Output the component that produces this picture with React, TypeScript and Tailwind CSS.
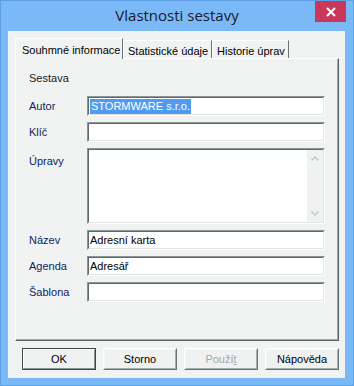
import React from "react";

const F = { fontFamily: '"Liberation Sans", Arial, sans-serif' };

function Field({ children, h = 20 }: { children?: React.ReactNode; h?: number }) {
  return (
    <div
      className="w-[238px] border-t border-l border-r border-b border-t-[#8a9494] border-l-[#8a9494] border-r-[#ffffff] border-b-[#ffffff]"
      style={{ height: h }}
    >
      <div className="h-full w-full border-t border-l border-r border-b border-t-[#5f6a6a] border-l-[#5f6a6a] border-r-[#e3e6e6] border-b-[#e3e6e6] bg-white flex items-center pl-[1px] text-[11px] text-black">
        {children}
      </div>
    </div>
  );
}

function Label({ children }: { children: React.ReactNode }) {
  return <div className="w-[58px] text-[11px] text-[#0f1e5e]">{children}</div>;
}

function Btn({ children, def, disabled }: { children: React.ReactNode; def?: boolean; disabled?: boolean }) {
  return (
    <div
      className={
        "w-[75px] h-[22px] border " +
        (def ? "border-[#3c4646]" : "border-t-white border-l-white border-r-[#6a7272] border-b-[#6a7272]")
      }
    >
      <div
        className={
          "h-full w-full border flex items-center justify-center text-[11px] bg-[#f0f2f2] " +
          (def
            ? "border-t-white border-l-white border-r-[#8a9090] border-b-[#8a9090]"
            : "border-t-[#f6f6f6] border-l-[#f6f6f6] border-r-[#a8adad] border-b-[#a8adad]") +
          (disabled ? " text-[#a2a8a8]" : " text-black")
        }
      >
        {children}
      </div>
    </div>
  );
}

export default function App() {
  return (
    <div className="w-[354px] h-[386px] bg-[#7bb9f6] border border-[#5c9fe3] flex flex-col relative" style={F}>
      <div className="h-[30px] flex items-center justify-center">
        <span
          className="text-[15px] text-[#1a1a2a] mt-[-1px]"
          style={{ fontFamily: '"Open Sans", "Noto Sans", sans-serif' }}
        >
          Vlastnosti sestavy
        </span>
      </div>
      <div className="absolute top-0 right-[7px] w-[31px] h-[21px] bg-[#c9375a] flex items-center justify-center">
        <svg width="10" height="10" viewBox="0 0 10 10">
          <path d="M1 1 L9 9 M9 1 L1 9" stroke="white" strokeWidth="2" />
        </svg>
      </div>
      <div className="ml-[7px] mr-[8px] mb-[7px] flex-1 bg-[#f1f3f3] flex flex-col pl-[7px] pr-[6px] pt-[6px]">
        <div className="flex items-end h-[21px] text-[11px] text-black">
          <div className="h-[21px] w-[108px] border-t border-l border-t-white border-l-white border-r border-r-[#6a7272] bg-[#f1f3f3] pl-[6px] pt-[3px] relative z-10 -mb-[1px]">
            Souhmné informace
          </div>
          <div className="h-[18px] w-[89px] border-t border-l border-t-white border-l-white border-r border-r-[#6a7272] pl-[4px] pt-[2px]">
            Statistické údaje
          </div>
          <div className="h-[18px] w-[77px] border-t border-l border-t-white border-l-white border-r border-r-[#6a7272] pl-[4px] pt-[2px]">
            Historie úprav
          </div>
        </div>
        <div className="w-[324px] h-[283px] border-t border-l border-t-white border-l-white border-r border-b border-r-[#5a6464] border-b-[#5a6464]">
          <div className="h-full w-full border-r border-b border-r-[#a0a6a6] border-b-[#a0a6a6] pl-[13px] pt-[11px] flex flex-col">
            <div className="h-[16px] text-[11px] text-[#1c1c24] flex items-center">Sestava</div>
            <div className="flex items-center mt-[10px]">
              <Label>Autor</Label>
              <Field>
                <span className="bg-[#4f9bf0] text-white px-[1px] leading-[15px] text-[11px]">STORMWARE s.r.o.</span>
              </Field>
            </div>
            <div className="flex items-center mt-[6px]">
              <Label>Klíč</Label>
              <Field />
            </div>
            <div className="flex items-start mt-[6px]">
              <Label>
                <div className="mt-[5px]">Úpravy</div>
              </Label>
              <div className="w-[238px] h-[76px] border-t border-l border-r border-b border-t-[#8a9494] border-l-[#8a9494] border-r-white border-b-white">
                <div className="h-full w-full border-t border-l border-r border-b border-t-[#5f6a6a] border-l-[#5f6a6a] border-r-[#e3e6e6] border-b-[#e3e6e6] bg-white flex justify-end">
                  <div className="w-[16px] h-full bg-[#f0f2f2] flex flex-col justify-between items-center py-[6px]">
                    <svg width="8" height="5" viewBox="0 0 8 5">
                      <path d="M0.5 4.5 L4 1 L7.5 4.5" stroke="#c4cccc" strokeWidth="1.6" fill="none" />
                    </svg>
                    <svg width="8" height="5" viewBox="0 0 8 5">
                      <path d="M0.5 0.5 L4 4 L7.5 0.5" stroke="#c4cccc" strokeWidth="1.6" fill="none" />
                    </svg>
                  </div>
                </div>
              </div>
            </div>
            <div className="flex items-center mt-[6px]">
              <Label>Název</Label>
              <Field>Adresní karta</Field>
            </div>
            <div className="flex items-center mt-[6px]">
              <Label>Agenda</Label>
              <Field>Adresář</Field>
            </div>
            <div className="flex items-center mt-[6px]">
              <Label>Šablona</Label>
              <Field />
            </div>
          </div>
        </div>
        <div className="flex gap-[7px] pl-[7px] mt-[7px]">
          <Btn def>OK</Btn>
          <Btn>Storno</Btn>
          <Btn disabled>
            <span>
              Použí<span className="underline">t</span>
            </span>
          </Btn>
          <Btn>Nápověda</Btn>
        </div>
      </div>
    </div>
  );
}
